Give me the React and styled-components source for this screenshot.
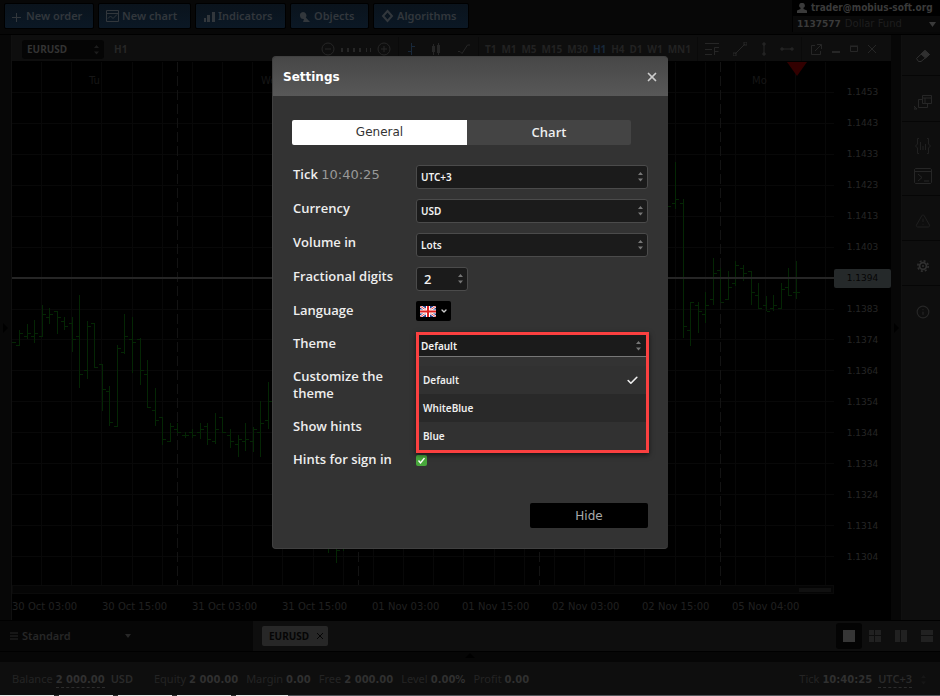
import React, { useState } from 'react';
import styled, { createGlobalStyle, css } from 'styled-components';
import { Check, ChevronDown, Info, TriangleAlert, X } from 'lucide-react';

const wide = '"DejaVu Sans", Verdana, sans-serif';
const narrow = '"Noto Sans", Tahoma, sans-serif';
const label = '"Open Sans", "Noto Sans", sans-serif';

const Global = createGlobalStyle`
  *, *::before, *::after { box-sizing: border-box; }
  html, body, #root { height: 100%; }
  body { margin: 0; background: #070707; overflow: hidden; }
  button, select, input { margin: 0; padding: 0; border: 0; background: none; font: inherit; color: inherit; }
  svg { display: block; flex: none; }
`;

const Shell = styled.div`
  display: flex;
  flex-direction: column;
  height: 100vh;
  color: #262626;
  font: 600 11px/16px ${narrow};
`;

/* ---------- top bar ---------- */
const TopBar = styled.header`
  display: flex;
  align-items: flex-start;
  height: 35px;
  flex: none;
  background: #070707;
  border-bottom: 1px solid #000;
`;
const TopActions = styled.nav`
  display: flex;
  gap: 4px;
  padding: 3px 4px;
  flex: 1;
`;
const TopButton = styled.button`
  display: flex;
  align-items: center;
  gap: 3px;
  height: 26px;
  width: ${p => p.$w}px;
  padding: 0 7px;
  background: linear-gradient(#0a131c, #0b1825);
  border: 1px solid #000;
  border-radius: 2px;
  color: #32373c;
  white-space: nowrap;
`;
const Account = styled.div`
  width: 148px;
  border-left: 1px solid #000;
`;
const AccountLine = styled.div`
  display: flex;
  align-items: center;
  gap: 4px;
  height: 16px;
  padding: 0 4px;
  background: ${p => (p.$dark ? '#000' : '#090909')};
  color: #3a3a3a;
  font: bold 10px/16px "DejaVu Sans Condensed", ${narrow};
  white-space: nowrap;
`;
const AccountId = styled.b`
  font: bold 9px/16px ${wide};
`;
const AccountType = styled.span`
  flex: 1;
  color: #1e1e1e;
  font: 10px/16px ${wide};
`;

/* ---------- workspace ---------- */
const Workspace = styled.main`
  display: flex;
  flex: 1;
  min-height: 0;
`;
const Gutter = styled.div`
  display: flex;
  align-items: center;
  justify-content: center;
  width: ${p => p.$w}px;
  flex: none;
  background: #070707;
  border-right: 1px solid #101010;
  color: #000;
`;
const ChartPanel = styled.section`
  display: flex;
  flex-direction: column;
  flex: 1;
  min-width: 0;
  background: #000;
`;
const ChartToolbar = styled.div`
  display: flex;
  align-items: center;
  height: 27px;
  flex: none;
  padding: 2px 0 0 10px;
  background: #0e0e0e;
  border-bottom: 1px solid #000;
  font: bold 10px/14px ${narrow};
`;
const SymbolBox = styled.div`
  position: relative;
  width: 82px;
  height: 19px;
  margin-right: 10px;
`;
const SymbolSelect = styled.select`
  width: 100%;
  height: 100%;
  padding: 0 5px;
  appearance: none;
  background: #050505;
  border-radius: 3px;
  color: #333;
`;
const ToolGroup = styled.div`
  display: flex;
  align-items: center;
  gap: ${p => p.$gap || 0}px;
  justify-content: ${p => p.$spread || 'space-around'};
  width: ${p => p.$w}px;
  height: 24px;
  padding: 0 ${p => p.$pad || 0}px;
  flex: none;
  border-left: ${p => (p.$edge ? '1px solid #0a0a0a' : '0')};
`;
const Spacer = styled.div`
  flex: 1;
`;
const Frame = styled.button`
  color: ${p => (p.$on ? '#18283a' : '#222')};
`;
const IconButton = styled.button`
  display: flex;
  align-items: center;
  justify-content: center;
  color: ${p => p.$tone || '#262626'};
`;
const ChartArea = styled.div`
  display: flex;
  flex: 1;
  min-height: 0;
`;
const PlotColumn = styled.div`
  display: flex;
  flex-direction: column;
  flex: 1;
  min-width: 0;
`;
const Plot = styled.svg`
  flex: 1;
  width: 100%;
  min-height: 0;
  overflow: hidden;
  text { font: 10px ${wide}; fill: #161616; }
`;
const ScrollTrack = styled.div`
  display: flex;
  align-items: center;
  justify-content: flex-end;
  height: 9px;
  padding: 0 2px;
  background: #050505;
  border: 1px solid #0a0a0a;
`;
const ScrollThumb = styled.div`
  width: 32px;
  height: 4px;
  background: #101010;
`;
const TimeAxis = styled.div`
  display: flex;
  height: 26px;
  padding-top: 5px;
  color: #202020;
  font: 10px/16px ${wide};
  white-space: nowrap;
`;
const TimeMark = styled.span`
  width: 90px;
  flex: none;
`;
const PriceAxis = styled.div`
  display: flex;
  flex-direction: column;
  justify-content: space-between;
  align-self: flex-start;
  width: 57px;
  padding-top: 21px;
  color: #242424;
  font: 9px/19px ${wide};
  text-align: center;
`;
const PriceMark = styled.span`
  height: 19px;
  margin-bottom: 12px;
  border-radius: 2px;
  background: ${p => (p.$now ? '#25292a' : 'none')};
  color: ${p => (p.$now ? '#050505' : '#262626')};
`;

/* ---------- side bar ---------- */
const SideBar = styled.aside`
  display: flex;
  flex-direction: column;
  width: 38px;
  flex: none;
  background: #0e0e0e;
`;
const SideSection = styled.div`
  display: flex;
  flex-direction: column;
  align-items: center;
  justify-content: center;
  gap: 14px;
  height: ${p => p.$h}px;
  padding: 5px 0 0 4px;
  border-bottom: 1px solid #060606;
  &:first-child { padding-top: 2px; }
  &:last-child { border: 0; }
`;

/* ---------- bottom bars ---------- */
const TabsBar = styled.div`
  display: flex;
  height: 32px;
  flex: none;
  border: solid #000;
  border-width: 1px 0;
`;
const Workset = styled.button`
  display: flex;
  align-items: center;
  gap: 4px;
  width: 253px;
  padding: 0 10px;
  background: #060606;
  color: #272727;
  font: 600 11px/16px ${narrow};
`;
const WorksetName = styled.span`
  width: 99px;
  text-align: left;
`;
const TabStrip = styled.div`
  display: flex;
  align-items: center;
  flex: 1;
  padding-left: 9px;
  background: #0e0e0e;
`;
const ChartTab = styled.button`
  display: flex;
  align-items: center;
  gap: 7px;
  height: 20px;
  padding: 0 4px 0 7px;
  border-radius: 2px;
  background: #272727;
  color: #050505;
  font: bold 10px/16px ${narrow};
`;
const LayoutPick = styled.button`
  display: flex;
  align-items: center;
  justify-content: center;
  width: 26px;
  height: 26px;
  border-radius: 3px;
  background: ${p => (p.$on ? '#040404' : 'none')};
  color: ${p => (p.$on ? '#363636' : '#212121')};
`;
const Splitter = styled.div`
  display: flex;
  align-items: flex-start;
  justify-content: center;
  height: 10px;
  flex: none;
  background: #060606;
  color: #000;
`;
const StatusBar = styled.footer`
  display: flex;
  align-items: center;
  gap: 8px;
  height: 33px;
  flex: none;
  padding: 1px 13px 0 12px;
  background: #0e0e0e;
  color: #242424;
  font: 11px/16px ${narrow};
  white-space: nowrap;
`;
const Stat = styled.span`
  display: flex;
  align-items: baseline;
  gap: 3px;
  margin-right: ${p => (p.$wide ? 13 : 0)}px;
`;
const Value = styled.b`
  color: #303030;
  font: bold 10px/14px ${wide};
  border-bottom: ${p => (p.$dashed ? '1px dashed #2c2c2c' : '0')};
`;
const Unit = styled.span`
  margin-left: 3px;
  color: #2a2a2a;
  font-weight: 600;
  border-bottom: ${p => (p.$dashed ? '1px dashed #2c2c2c' : '0')};
`;
const TaskEdge = styled.div`
  height: 1px;
  flex: none;
  background:
    repeating-linear-gradient(90deg, #e8e8e8 0 54px, #333 54px 59px) 0 0 / 288px 1px no-repeat,
    #53555a;
`;

/* ---------- settings dialog ---------- */
const Dialog = styled.div`
  position: fixed;
  inset: 0;
  display: flex;
  align-items: flex-start;
  justify-content: center;
  padding-top: 56px;
`;
const DialogCard = styled.div`
  width: 396px;
  background: #333;
  border: solid #404040;
  border-width: 1px 0 1px 1px;
  border-radius: 4px;
  overflow: hidden;
  color: #eee;
  font: 600 13px/17px ${label};
`;
const DialogHeader = styled.div`
  display: flex;
  align-items: center;
  justify-content: space-between;
  height: 39px;
  padding: 0 9px 0 10px;
  background: linear-gradient(#474747, #585858);
`;
const DialogTitle = styled.h1`
  margin: 0;
  color: #fff;
  font: bold 12px/16px ${wide};
`;
const DialogBody = styled.div`
  padding: 24px 20px 20px;
`;
const Tabs = styled.div`
  display: flex;
  height: 25px;
  margin: 0 17px 20px -1px;
  border-radius: 2px;
  overflow: hidden;
`;
const Tab = styled.button`
  flex: ${p => (p.$on ? 175 : 164)};
  padding-bottom: 2px;
  background: ${p => (p.$on ? '#fff' : '#444')};
  color: ${p => (p.$on ? '#333' : '#eee')};
  font: ${p => (p.$on ? `12px/16px ${wide}` : `600 13px/16px ${label}`)};
`;
const FormRow = styled.div`
  display: grid;
  grid-template-columns: 123px 1fr;
  align-items: start;
`;
const RowLabel = styled.label`
  padding: 1px 0 15px;
`;
const Clock = styled.span`
  color: #999;
  font: 13px/16px ${wide};
`;
const Control = styled.div`
  position: relative;
  width: ${p => (p.$w ? `${p.$w}px` : '100%')};
  padding-bottom: 10px;
`;
const field = css`
  display: block;
  width: 100%;
  height: 24px;
  appearance: none;
  background: #1b1b1b;
  border: 1px solid #4b4b4b;
  border-radius: 3px;
  color: #f2f2f2;
  outline: 0;
`;
const Select = styled.select`
  ${field}
  padding: 0 4px;
  font: 600 10px/16px ${narrow};
`;
const NumberInput = styled.input`
  ${field}
  padding: 0 7px;
  font: 600 13px/16px ${label};
  -moz-appearance: textfield;
  &::-webkit-inner-spin-button { display: none; }
`;
const ArrowSlot = styled.span`
  position: absolute;
  top: ${p => p.$top}px;
  right: 4px;
  color: ${p => p.$tone || '#777'};
  pointer-events: none;
`;
const FlagButton = styled.button`
  display: flex;
  align-items: center;
  gap: 4px;
  width: 35px;
  height: 20px;
  padding: 0 4px;
  background: #000;
  border-radius: 2px;
  color: #ccc;
`;
const Tick = styled.input`
  display: block;
  width: 11px;
  height: 11px;
  margin-top: 5px;
  appearance: none;
  border-radius: 2px;
  background: #48a83c url("data:image/svg+xml,%3Csvg xmlns='http://www.w3.org/2000/svg' viewBox='0 0 11 11'%3E%3Cpath d='M2.5 5.5l2 2.5 4-5' fill='none' stroke='white' stroke-width='1.4'/%3E%3C/svg%3E");
`;
const OpenFrame = styled.div`
  position: absolute;
  z-index: 2;
  top: -2px;
  left: 0;
  right: -1px;
  border: 3px solid #fb4040;
  background: #333;
  box-shadow: 0 2px 5px rgba(0, 0, 0, 0.6);
`;
const OpenSelect = styled(Select)`
  height: 22px;
  padding: 0 2px;
  border: 0;
  border-bottom: 1px solid #777;
  border-radius: 0;
`;
const Menu = styled.ul`
  margin: 0;
  padding: 9px 0 0;
  list-style: none;
`;
const MenuItem = styled.li`
  display: flex;
  align-items: center;
  justify-content: space-between;
  height: 28px;
  padding: 0 7px 0 4px;
  background: ${p => (p.$alt ? '#292929' : '#313131')};
  font: 600 10px/16px ${narrow};
`;
const DialogFooter = styled.div`
  display: flex;
  justify-content: flex-end;
  padding-top: 20px;
`;
const HideButton = styled.button`
  width: 118px;
  height: 25px;
  background: #000;
  border-radius: 2px;
  color: #aaa;
  font: 12px/16px ${wide};
`;

/* ---------- drawings ---------- */
const Arrows = () => (
  <svg width="7" height="11" viewBox="0 0 7 11" fill="currentColor">
    <path d="M1 4L3.500 1 6 4zM1 7.500h5L3.500 10.500z" />
  </svg>
);
const Line = ({ w = 14, h = 14, d, fill, sw = 1 }) => (
  <svg width={w} height={h} viewBox={`0 0 ${w} ${h}`} fill={fill ? 'currentColor' : 'none'} stroke={fill ? 'none' : 'currentColor'} strokeWidth={sw}>
    <path d={d} />
  </svg>
);
const Flag = () => (
  <svg width="16" height="11" viewBox="0 0 16 11">
    <path fill="#2b3f8c" d="M0 0h16v11H0z" />
    <path stroke="#fff" strokeWidth="2.4" d="M0 0l16 11M16 0L0 11" />
    <path stroke="#e33" strokeWidth="0.9" d="M0 0l16 11M16 0L0 11" />
    <path stroke="#fff" strokeWidth="4" d="M8 0v11M0 5.500h16" />
    <path stroke="#e02020" strokeWidth="2" d="M8 0v11M0 5.500h16" />
  </svg>
);
const Gear = () => (
  <svg width="14" height="14" viewBox="0 0 14 14" fill="none" stroke="currentColor">
    <circle cx="7" cy="7" r="5.2" strokeWidth="1.600" strokeDasharray="2.040" />
    <circle cx="7" cy="7" r="3.400" strokeWidth="1.800" />
    <circle cx="7" cy="7" r="1" fill="currentColor" stroke="none" />
  </svg>
);

/* x, high, low, open, close */
const bars = [
  [12, 342, 343, 342, 342], [19, 330, 346, 345, 333], [27, 324, 339, 336, 333], [34, 320, 343, 336, 333],
  [42, 305, 337, 336, 314], [49, 308, 324, 317, 314], [57, 311, 334, 311, 317], [64, 317, 330, 321, 326],
  [72, 317, 352, 323, 339], [79, 295, 388, 336, 374], [87, 321, 379, 370, 326], [94, 323, 368, 323, 367],
  [102, 364, 411, 364, 389], [109, 386, 426, 391, 422], [117, 345, 427, 426, 348], [124, 314, 354, 352, 336],
  [132, 317, 373, 339, 342], [140, 338, 385, 339, 370], [147, 360, 408, 374, 407], [155, 388, 426, 410, 420],
  [162, 417, 445, 417, 439], [170, 423, 442, 441, 426], [177, 423, 433, 429, 432], [185, 432, 438, 435, 435],
  [192, 429, 438, 432, 435], [200, 423, 439, 432, 429], [207, 423, 445, 426, 439], [215, 413, 444, 441, 429],
  [222, 417, 433, 417, 432], [230, 429, 448, 435, 441], [238, 435, 457, 444, 439], [245, 423, 451, 441, 439],
  [253, 427, 452, 441, 429], [260, 401, 457, 432, 423], [268, 382, 429, 420, 401],
  [328, 500, 553, 520, 540], [336, 530, 563, 540, 550], [343, 520, 551, 545, 530],
  [667, 190, 210, 200, 206], [675, 162, 209, 203, 199], [683, 199, 338, 203, 326], [690, 302, 346, 330, 302],
  [698, 302, 333, 305, 311], [705, 292, 323, 314, 305], [713, 258, 305, 299, 273], [720, 268, 302, 270, 302],
  [728, 271, 300, 299, 287], [735, 261, 286, 283, 265], [743, 265, 281, 268, 273], [751, 271, 305, 271, 292],
  [758, 283, 309, 295, 308], [766, 296, 311, 305, 311], [773, 295, 311, 308, 305], [781, 283, 309, 308, 289],
  [788, 268, 296, 287, 295], [796, 261, 299, 292, 292],
];
const barPath = bars.map(([x, hi, lo, o, c]) => `M${x + 0.5} ${hi}V${lo}M${x - 3} ${o + 0.5}h3M${x + 1} ${c + 0.5}h3`).join('');
const columns = Array.from({ length: 27 }, (_, i) => 42 + Math.round((i * 181) / 6) - 0.5);
const rows = Array.from({ length: 16 }, (_, i) => 92.5 + Math.round((i * 464) / 15));
const prices = ['1.1453', '1.1443', '1.1433', '1.1423', '1.1413', '1.1403', '1.1394', '1.1383', '1.1374', '1.1364', '1.1354', '1.1344', '1.1334', '1.1324', '1.1314', '1.1304'];
const times = ['30 Oct 03:00', '30 Oct 15:00', '31 Oct 03:00', '31 Oct 15:00', '01 Nov 03:00', '01 Nov 15:00', '02 Nov 03:00', '02 Nov 15:00', '05 Nov 04:00'];

const ChartPlot = () => (
  <Plot>
    <g transform="translate(-12 -62)">
      <path stroke="#080808" d={columns.map(x => `M${x} 62v600`).join('') + rows.map(y => `M12 ${y}h825`).join('')} />
      <path stroke="#131313" strokeDasharray="10 4" d="M177.500 62v600M358.500 62v600M539.500 62v600M720.500 62v600" />
      <path stroke="#042604" d={barPath} />
      <path stroke="#262626" strokeWidth="2" d="M12 278h825" />
      <path fill="#320000" d="M787 62h20l-10 14z" />
      <text x="89" y="84">Tu</text>
      <text x="261" y="84">We</text>
      <text x="752" y="84">Mo</text>
    </g>
  </Plot>
);

const Field = ({ id, text, extra, children }) => (
  <FormRow>
    <RowLabel htmlFor={id}>{text} {extra}</RowLabel>
    {children}
  </FormRow>
);
const PickField = ({ id, text, extra, value }) => (
  <Field id={id} text={text} extra={extra}>
    <Control>
      <Select id={id} defaultValue={value}><option>{value}</option></Select>
      <ArrowSlot $top={6}><Arrows /></ArrowSlot>
    </Control>
  </Field>
);

const topButtons = [
  ['New order', 90, <Line w={11} d="M0 8.500h9M4.500 4v9" />],
  ['New chart', 93, <Line w={13} d="M.5 1.500h12v11H.5zM.5 4.500h12M2 9.500l2.500-2.500 2.500 2.500 4-4" />],
  ['Indicators', 91, <Line w={12} fill d="M1 9h2v4H1zM4 6h3v7H4zM9 3h3v10H9z" />],
  ['Objects', 79, <Line w={13} fill d="M5 3a3.500 3.500 0 0 1 2.800 5.600L12 13H5l1-3A3.500 3.500 0 1 1 5 3z" />],
  ['Algorithms', 96, <Line w={13} sw={2} d="M6.500 2l4.500 5-4.500 5L2 7z" />],
];

function TradingDesk() {
  return (
    <Shell>
      <TopBar>
        <TopActions>
          {topButtons.map(([name, w, icon]) => <TopButton key={name} $w={w}>{icon}{name}</TopButton>)}
        </TopActions>
        <Account>
          <AccountLine $dark>
            <Line w={10} h={10} fill d="M5 0a2.500 2.500 0 0 1 1.500 4.700v1.300L10 7.500V10H0V7.500L3.500 6V4.700A2.500 2.500 0 0 1 5 0z" />
            trader@mobius-soft.org
          </AccountLine>
          <AccountLine>
            <AccountId>1137577</AccountId>
            <AccountType>Dollar Fund</AccountType>
            <Line w={7} h={5} fill d="M0 0h7L3.500 5z" />
          </AccountLine>
        </Account>
      </TopBar>

      <Workspace>
        <Gutter $w={12}><Line w={5} h={10} fill d="M0 0l5 5-5 5z" /></Gutter>
        <ChartPanel>
          <ChartToolbar>
            <SymbolBox>
              <SymbolSelect aria-label="Symbol"><option>EURUSD</option></SymbolSelect>
              <ArrowSlot $top={4} $tone="#1c1c1c"><Arrows /></ArrowSlot>
            </SymbolBox>
            H1
            <Spacer />
            <ToolGroup $w={80} $spread="flex-start" $gap={6} $pad={3}>
              <IconButton aria-label="Zoom out"><Line d="M7 1a6 6 0 1 1 0 12A6 6 0 0 1 7 1zM4 7h6" /></IconButton>
              <Line w={30} h={5} fill d="M0 1h2v4H0zM6 1h2v4H6zM12 1h2v4h-2zM18 1h2v4h-2zM25 1h1v4h-1zM29 1h1v4h-1z" />
              <IconButton aria-label="Zoom in"><Line d="M7 1a6 6 0 1 1 0 12A6 6 0 0 1 7 1zM4 7h6M7 4v6" /></IconButton>
            </ToolGroup>
            <ToolGroup $w={80} $edge>
              <IconButton aria-label="Bars" $tone="#18283a"><Line w={8} d="M4.500 1v12M1 9.500h3M5 4.500h3" /></IconButton>
              <IconButton aria-label="Candles"><Line w={10} fill d="M1 4h3v6H1zM2 2h1v11H2zM6 3h3v8H6zM7 1h1v12H7z" /></IconButton>
              <IconButton aria-label="Line"><Line w={12} d="M0 9.500h2l2 2L9.500 3H12" /></IconButton>
            </ToolGroup>
            <ToolGroup $w={219} $edge $spread="space-between" $pad={6}>
              {['T1', 'M1', 'M5', 'M15', 'M30', 'H1', 'H4', 'D1', 'W1', 'MN1'].map(t => <Frame key={t} $on={t === 'H1'}>{t}</Frame>)}
            </ToolGroup>
            <ToolGroup $w={104} $edge>
              <IconButton aria-label="Fibonacci"><Line d="M0 1.500h14M0 7.500h7M0 12.500h7M9.500 13V5.500h4.500M9.500 9.500h4" /></IconButton>
              <IconButton aria-label="Trend line"><Line d="M2 12L12 2M0 11h3v3H0zM11 0h3v3h-3z" /></IconButton>
              <IconButton aria-label="Vertical line"><Line w={4} d="M2 1v12M1 1h2v2H1zM1 11h2v2H1z" /></IconButton>
              <IconButton aria-label="Horizontal line"><Line h={4} d="M1 2h12M1 1h2v2H1zM11 1h2v2h-2z" /></IconButton>
            </ToolGroup>
            <ToolGroup $w={90} $edge $spread="flex-start" $gap={10} $pad={9}>
              <IconButton aria-label="Detach"><Line w={11} h={11} d="M4 1.500H.5v9h9V7M6 .5h4.500V5M4 7l6-6" /></IconButton>
              <IconButton aria-label="Minimise"><Line w={8} h={9} fill d="M0 6h8v2H0z" /></IconButton>
              <IconButton aria-label="Maximise"><Line w={8} h={8} d="M.5 1.500h7v5h-7zM0 1h8" /></IconButton>
              <IconButton aria-label="Close chart"><Line w={8} h={8} d="M0 0l8 8M8 0L0 8" /></IconButton>
            </ToolGroup>
          </ChartToolbar>
          <ChartArea>
            <PlotColumn>
              <ChartPlot />
              <ScrollTrack><ScrollThumb /></ScrollTrack>
              <TimeAxis>{times.map(t => <TimeMark key={t}>{t}</TimeMark>)}</TimeAxis>
            </PlotColumn>
            <PriceAxis>{prices.map(p => <PriceMark key={p} $now={p === '1.1394'}>{p}</PriceMark>)}</PriceAxis>
          </ChartArea>
        </ChartPanel>
        <Gutter $w={11}><Line w={5} h={10} fill d="M0 0l5 5-5 5z" /></Gutter>
        <SideBar>
          <SideSection $h={41}>
            <IconButton aria-label="Erase" $tone="#303030">
              <svg width="16" height="14" viewBox="0 0 16 14" fill="none" stroke="currentColor">
                <path d="M1.500 9.500L10 1.500l4.500 4L6 12.500H3.500z" /><path fill="currentColor" d="M6 5l4-3.500 4.500 4-4 3.500z" />
              </svg>
            </IconButton>
          </SideSection>
          <SideSection $h={46}><IconButton aria-label="Windows"><Line w={18} h={17} d="M8.500 2.500h9v8h-9zM8.500 5h9M11 5v5.500M8 6.500H4.500v8h9V11M0 16v-3l3 3z" /></IconButton></SideSection>
          <SideSection $h={74}>
            <IconButton aria-label="Scripts" $tone="#202020"><Line w={16} h={16} d="M4 .5H2.500V6L.5 8l2 2v5.500H4M12 .5h1.500V6l2 2-2 2v5.500H12M5.500 4v8M8 8v4M10.500 6v6" /></IconButton>
            <IconButton aria-label="Console"><Line w={18} h={16} d="M1.500.5h15l1 1v13l-1 1h-15l-1-1v-13zM.5 3.500h17M4 6l4 3.500L4 13M10 13h5" /></IconButton>
          </SideSection>
          <SideSection $h={45}><IconButton aria-label="Alerts" $tone="#1f1f1f"><TriangleAlert size={16} strokeWidth={1.5} /></IconButton></SideSection>
          <SideSection $h={45}><IconButton aria-label="Settings" $tone="#303030"><Gear /></IconButton></SideSection>
          <SideSection $h={46}><IconButton aria-label="About"><Info size={14} strokeWidth={2} /></IconButton></SideSection>
        </SideBar>
      </Workspace>

      <TabsBar>
        <Workset>
          <Line w={8} h={8} d="M0 1h8M0 4h8M0 7h8" />
          <WorksetName>Standard</WorksetName>
          <Line w={6} h={4} fill d="M0 0h6L3 4z" />
        </Workset>
        <TabStrip>
          <ChartTab>EURUSD<Line w={8} h={8} d="M1 1l6 6M7 1L1 7" /></ChartTab>
          <Spacer />
          <LayoutPick $on aria-label="Single"><Line w={12} h={12} fill d="M0 0h12v12H0z" /></LayoutPick>
          <LayoutPick aria-label="Grid"><Line w={12} h={12} fill d="M0 0h5v5H0zM6 0h6v5H6zM0 6h5v6H0zM6 6h6v6H6z" /></LayoutPick>
          <LayoutPick aria-label="Columns"><Line w={12} h={12} fill d="M0 0h5v12H0zM6 0h6v12H6z" /></LayoutPick>
          <LayoutPick aria-label="Rows"><Line w={12} h={12} fill d="M0 0h12v5H0zM0 6h12v6H0z" /></LayoutPick>
        </TabStrip>
      </TabsBar>
      <Splitter><Line w={10} h={6} fill d="M0 6l5-5 5 5z" /></Splitter>
      <StatusBar>
        <Stat $wide>Balance <Value $dashed>2 000.00</Value><Unit>USD</Unit></Stat>
        <Stat>Equity <Value>2 000.00</Value></Stat>
        <Stat>Margin <Value>0.00</Value></Stat>
        <Stat>Free <Value>2 000.00</Value></Stat>
        <Stat>Level <Value>0.00%</Value></Stat>
        <Stat>Profit <Value>0.00</Value></Stat>
        <Spacer />
        <Stat>Tick <Value>10:40:25</Value><Unit $dashed>UTC+3</Unit></Stat>
        <ArrowsDim />
      </StatusBar>
      <TaskEdge />
    </Shell>
  );
}

const DimSlot = styled.span`
  color: #161616;
`;
const ArrowsDim = () => <DimSlot><Arrows /></DimSlot>;

function SettingsDialog() {
  const [tab, setTab] = useState('General');
  return (
    <Dialog role="dialog" aria-label="Settings">
      <DialogCard>
        <DialogHeader>
          <DialogTitle>Settings</DialogTitle>
          <IconButton aria-label="Close" $tone="#ccc"><X size={14} strokeWidth={3} /></IconButton>
        </DialogHeader>
        <DialogBody>
          <Tabs>
            {['General', 'Chart'].map(t => <Tab key={t} $on={t === tab} onClick={() => setTab(t)}>{t}</Tab>)}
          </Tabs>
          <PickField id="tick" text="Tick" extra={<Clock>10:40:25</Clock>} value="UTC+3" />
          <PickField id="currency" text="Currency" value="USD" />
          <PickField id="volume" text="Volume in" value="Lots" />
          <Field id="digits" text="Fractional digits">
            <Control $w={52}>
              <NumberInput id="digits" type="number" defaultValue="2" />
              <ArrowSlot $top={6}><Arrows /></ArrowSlot>
            </Control>
          </Field>
          <Field id="language" text="Language">
            <FlagButton id="language"><Flag /><ChevronDown size={8} strokeWidth={4} /></FlagButton>
          </Field>
          <Field id="theme" text="Theme">
            <Control>
              <OpenFrame>
                <OpenSelect id="theme" defaultValue="Default">
                  <option>Default</option><option>WhiteBlue</option><option>Blue</option>
                </OpenSelect>
                <ArrowSlot $top={5}><Arrows /></ArrowSlot>
                <Menu role="listbox">
                  <MenuItem role="option" aria-selected="true">Default<Check size={13} strokeWidth={3} /></MenuItem>
                  <MenuItem role="option" $alt>WhiteBlue</MenuItem>
                  <MenuItem role="option">Blue</MenuItem>
                </Menu>
              </OpenFrame>
            </Control>
          </Field>
          <Field id="customize" text="Customize the theme"><Tick id="customize" type="checkbox" defaultChecked /></Field>
          <Field id="hints" text="Show hints"><Tick id="hints" type="checkbox" defaultChecked /></Field>
          <Field id="signin" text="Hints for sign in"><Tick id="signin" type="checkbox" defaultChecked /></Field>
          <DialogFooter><HideButton>Hide</HideButton></DialogFooter>
        </DialogBody>
      </DialogCard>
    </Dialog>
  );
}

export default function App() {
  return (
    <>
      <Global />
      <TradingDesk />
      <SettingsDialog />
    </>
  );
}
